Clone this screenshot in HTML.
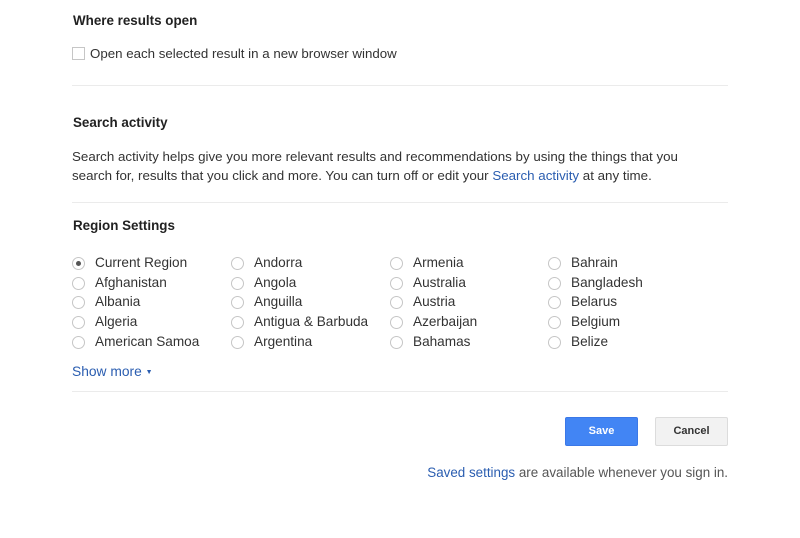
<!DOCTYPE html><html><head><style>
body{margin:0;width:800px;height:538px;background:#fff;font-family:"Liberation Sans",Arial,sans-serif;font-size:13px;color:#222;position:relative;overflow:hidden}
.a{position:absolute;white-space:nowrap}
h{position:absolute;font-weight:bold;font-size:13.4px;left:73px}
.hr{position:absolute;left:72px;width:656px;height:1px;background:#ebebeb}
.r{position:absolute;width:13px;height:13px;border:1px solid #c6c6c6;border-radius:50%;box-sizing:border-box}
.l{color:#2a5db0}
</style></head><body>
<h style="top:13px">Where results open</h>
<div class="a" style="left:72px;top:47px;width:13px;height:13px;border:1px solid #c6c6c6;box-sizing:border-box"></div>
<div class="a" style="left:90px;top:46px;color:#333;font-size:13.3px">Open each selected result in a new browser window</div>
<div class="hr" style="top:85px"></div>
<h style="top:115px">Search activity</h>
<div class="a" style="left:72px;top:147px;line-height:19px;color:#333;font-size:13.35px">Search activity helps give you more relevant results and recommendations by using the things that you<br>search for, results that you click and more. You can turn off or edit your <span class="l">Search activity</span> at any time.</div>
<div class="hr" style="top:202px"></div>
<h style="top:218px">Region Settings</h>
<div id="g"></div>
<div class="a l" style="left:72px;top:364px;font-size:13.8px">Show more <span style="font-size:7px;vertical-align:2px">▼</span></div>
<div class="hr" style="top:391px"></div>
<div class="a" style="left:565px;top:417px;width:73px;height:29px;background:#4285f4;border:1px solid #3b78e7;box-sizing:border-box;border-radius:2px;color:#fff;font-weight:bold;font-size:11px;text-align:center;line-height:27px">Save</div>
<div class="a" style="left:655px;top:417px;width:73px;height:29px;background:#f2f2f2;border:1px solid #dcdcdc;box-sizing:border-box;border-radius:2px;color:#333;font-weight:bold;font-size:11px;text-align:center;line-height:27px">Cancel</div>
<div class="a" style="right:72px;top:465px;color:#555;font-size:13.4px"><span class="l">Saved settings</span> are available whenever you sign in.</div>
<script>
var c=[["Current Region","Afghanistan","Albania","Algeria","American Samoa"],["Andorra","Angola","Anguilla","Antigua & Barbuda","Argentina"],["Armenia","Australia","Austria","Azerbaijan","Bahamas"],["Bahrain","Bangladesh","Belarus","Belgium","Belize"]];
var xs=[72,231,390,548],ys=[263,283,302,322,342],h="";
c.forEach(function(col,i){col.forEach(function(t,j){h+='<div class="r" style="left:'+xs[i]+'px;top:'+(ys[j]-6)+'px">'+(i==0&&j==0?'<div style="width:5px;height:5px;background:#555;border-radius:50%;margin:3px"></div>':'')+'</div><div class="a" style="left:'+(xs[i]+23)+'px;top:'+(ys[j]-8)+'px;font-size:13.6px;color:#333">'+t.replace("&","&amp;")+'</div>';});});
document.getElementById("g").innerHTML=h;
</script>
</body></html>
